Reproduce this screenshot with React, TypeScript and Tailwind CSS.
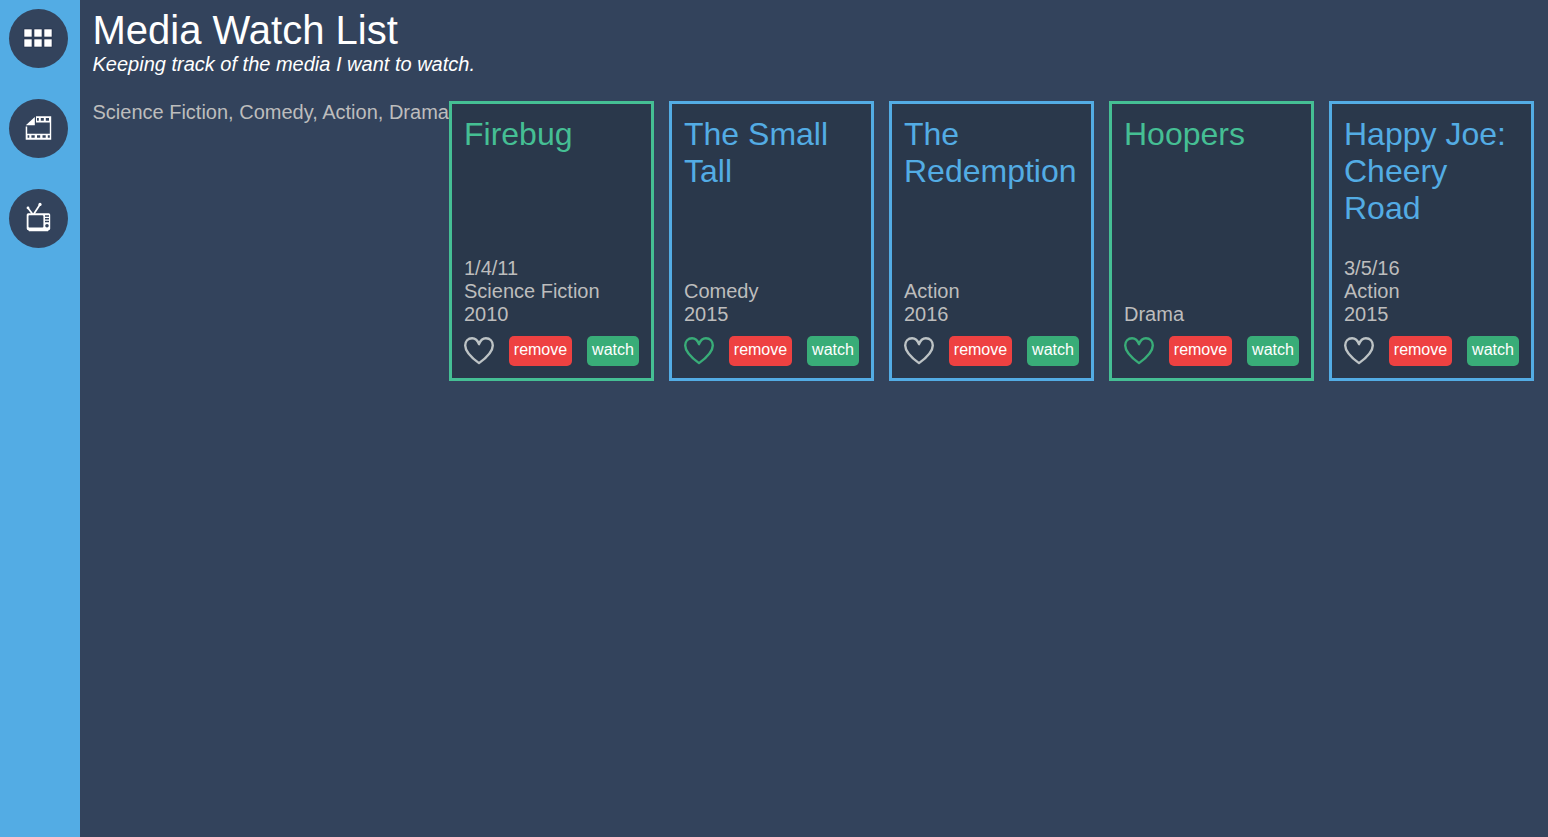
import React from "react";

type Medium = "movie" | "series";

interface MediaItem {
  name: string;
  medium: Medium;
  watchedOn?: string;
  category: string;
  year?: number;
  favorite: boolean;
}

const items: MediaItem[] = [
  { name: "Firebug", medium: "series", watchedOn: "1/4/11", category: "Science Fiction", year: 2010, favorite: false },
  { name: "The Small Tall", medium: "movie", category: "Comedy", year: 2015, favorite: true },
  { name: "The Redemption", medium: "movie", category: "Action", year: 2016, favorite: false },
  { name: "Hoopers", medium: "series", category: "Drama", favorite: true },
  { name: "Happy Joe: Cheery Road", medium: "movie", watchedOn: "3/5/16", category: "Action", year: 2015, favorite: false },
];

const categories = Array.from(new Set(items.map((item) => item.category))).join(", ");

function NavButton({ label, children }: { label: string; children: React.ReactNode }) {
  return (
    <button aria-label={label} className="flex size-[59px] items-center justify-center rounded-full bg-[#33435c]">
      <svg viewBox="0 0 59 59" className="size-[59px]" fill="none">
        {children}
      </svg>
    </button>
  );
}

function GridIcon() {
  return (
    <g fill="#fff" stroke="#1f2b45" strokeWidth="0.6">
      {[20, 30].map((y) => [15, 25, 35].map((x) => <rect key={`${x}-${y}`} x={x} y={y} width="8" height="8" />))}
    </g>
  );
}

function FilmIcon() {
  return (
    <>
      <path fill="#fff" d="M25.8 18V26.3H16.8Z" />
      <path
        fill="#fff"
        fillRule="evenodd"
        d="M27 17.3H42.2V40.8H16.7V27.5H18.2V34.8H40.8V23.6H27ZM28 19V21.8H29.8V19ZM31.8 19V21.8H34.8V19ZM36.8 19V21.8H40V19ZM18.6 36.3V38.8H20.3V36.3ZM22.4 36.3V38.8H25.7V36.3ZM28 36.3V38.8H31.2V36.3ZM33.5 36.3V38.8H36.7V36.3ZM38.8 36.3V38.8H40.8V36.3Z"
      />
    </>
  );
}

function TvIcon() {
  return (
    <>
      <path stroke="#fff" strokeWidth="1.7" d="M19 19L23.5 25M31 15.5L24.8 25" />
      <circle cx="19" cy="18.9" r="1.4" fill="#fff" />
      <circle cx="31" cy="15.4" r="1.6" fill="#fff" />
      <path
        fill="#fff"
        fillRule="evenodd"
        d="M19.2 24.3H39.7Q41.2 24.3 41.2 25.8V39.8Q41.2 41.2 39.6 41.2L39 42.2H20L19.4 41.2Q17.7 41.2 17.7 39.5V25.8Q17.7 24.3 19.2 24.3ZM20.3 26.3Q19.5 26.3 19.5 27.2V37.5Q19.5 38.4 20.3 38.4H33.5Q34.4 38.4 34.4 37.5V27.2Q34.4 26.3 33.5 26.3ZM36 26.3V27.7H40V26.3ZM36 29V30.5H40V29ZM36 31.8V33.3H40V31.8Z"
      />
      <circle cx="38" cy="36.7" r="1.8" fill="#33435c" />
    </>
  );
}

function Heart({ active }: { active: boolean }) {
  return (
    <button aria-label="favorite" className={active ? "text-[#39ad78]" : "text-[#bdc3c5]"}>
      <svg viewBox="0 0 30 30" className="size-[30px]" fill="none" stroke="currentColor" strokeWidth="2.4" strokeLinejoin="round">
        <path d="M15 8.2C13.6 4.2 11 2.2 8.1 2.2C4.1 2.2 1.2 5.2 1.2 9.4C1.2 16.3 8.3 22.2 15 27.1C21.7 22.2 28.8 16.3 28.8 9.4C28.8 5.2 25.9 2.2 21.9 2.2C19 2.2 16.4 4.2 15 8.2Z" />
      </svg>
    </button>
  );
}

function MediaCard({ item }: { item: MediaItem }) {
  return (
    <article
      className={`flex h-[280px] w-[205px] shrink-0 flex-col border-3 bg-[#2a384b] p-3 ${
        item.medium === "movie" ? "border-[#53ace4] text-[#53ace4]" : "border-[#45bf94] text-[#45bf94]"
      }`}
    >
      <h2 className="text-[32px] leading-[37px]">{item.name}</h2>
      <div className="mt-auto text-[20px] leading-[23px] text-[#bdbdbd]">
        {item.watchedOn && <div>{item.watchedOn}</div>}
        <div>{item.category}</div>
        {item.year && <div>{item.year}</div>}
      </div>
      <div className="mt-2.5 flex justify-between text-[16px] leading-[18px] text-white">
        <Heart active={item.favorite} />
        <button className="flex h-[30px] w-[63px] justify-center rounded-[5px] bg-[#ee4141] pt-[5px]">remove</button>
        <button className="flex h-[30px] w-[52px] justify-center rounded-[5px] bg-[#39ad78] pt-[5px]">watch</button>
      </div>
    </article>
  );
}

export default function App() {
  return (
    <div className="flex min-h-screen bg-[#33435c] font-['Liberation_Sans',Arial,sans-serif]">
      <nav className="flex w-20 shrink-0 flex-col gap-[31px] bg-[#53ace4] pt-[9px] pl-[9px]">
        <NavButton label="All media"><GridIcon /></NavButton>
        <NavButton label="Movies"><FilmIcon /></NavButton>
        <NavButton label="Series"><TvIcon /></NavButton>
      </nav>
      <main className="min-w-0 flex-1 pt-[7px] pl-[12.5px]">
        <header className="text-white">
          <h1 className="text-[40px] leading-[46px]">Media Watch List</h1>
          <p className="text-[20px] leading-[23px] italic">Keeping track of the media I want to watch.</p>
        </header>
        <section className="mt-[25px] flex">
          <p className="w-[356.5px] shrink-0 text-[20px] leading-[23px] whitespace-nowrap text-[#bdbdbd]">{categories}</p>
          <div className="flex gap-[15px]">
            {items.map((item) => (
              <MediaCard key={item.name} item={item} />
            ))}
          </div>
        </section>
      </main>
    </div>
  );
}
